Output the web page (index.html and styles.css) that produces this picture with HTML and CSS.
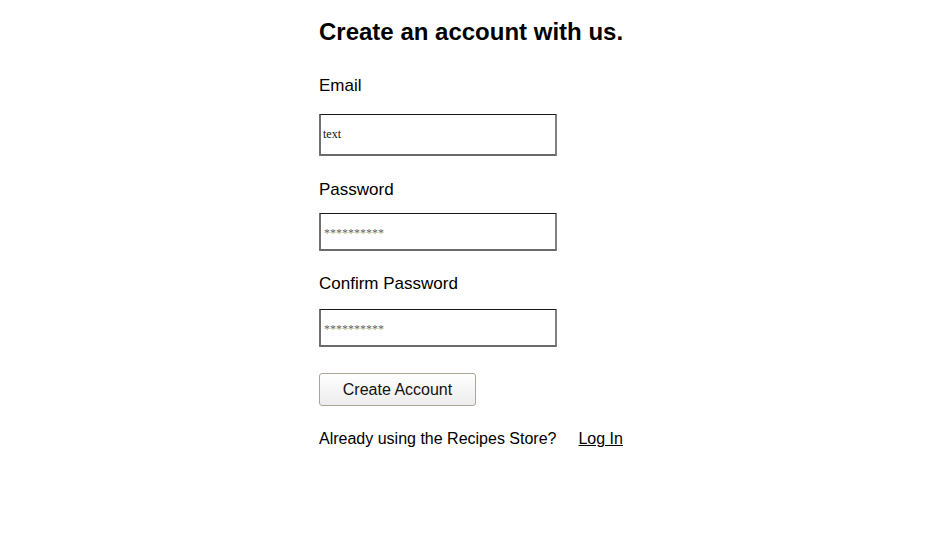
FILE: index.html
```html
<!DOCTYPE html>
<html>
<head>
<meta charset="utf-8">
<link rel="stylesheet" href="styles.css">
</head>
<body>
<main class="page">
  <div class="form">
    <h1 class="title">Create an account with us.</h1>
    <div class="label label-email">Email</div>
    <div class="box box-tall"><span class="value">text</span></div>
    <div class="label label-pass">Password</div>
    <div class="box"><span class="value dots">**********</span></div>
    <div class="label label-confirm">Confirm Password</div>
    <div class="box box-confirm"><span class="value dots">**********</span></div>
    <button class="btn">Create Account</button>
    <div class="footer">
      <span>Already using the Recipes Store?</span>
      <a class="link" href="#">Log In</a>
    </div>
  </div>
</main>
</body>
</html>
```

FILE: styles.css
```css
html, body {
  margin: 0;
  padding: 0;
  background: #ffffff;
}
body {
  font-family: "Liberation Sans", Arial, sans-serif;
  color: #000;
}
.page {
  display: flex;
  justify-content: flex-start;
  padding-left: 319px;
}
.form {
  width: fit-content;
  display: flex;
  flex-direction: column;
  align-items: flex-start;
  padding-top: 18px;
}
.title {
  margin: 0;
  font-size: 24px;
  line-height: 28px;
  font-weight: bold;
}
.label {
  font-size: 17px;
  line-height: 20px;
}
.label-email { margin-top: 30px; }
.label-pass { margin-top: 24px; }
.label-confirm { margin-top: 23px; }
.box {
  box-sizing: border-box;
  width: 238px;
  height: 38px;
  margin-top: 13px;
  border-top: 1px solid #1a1a1a;
  border-left: 2px solid #707070;
  border-right: 2px solid #808080;
  border-bottom: 2px solid #6a6a6a;
  border-radius: 1px;
  display: flex;
  align-items: center;
  padding-left: 2px;
}
.box-tall {
  height: 42px;
  margin-top: 18px;
}
.box-confirm { margin-top: 15px; }
.value {
  font-family: "Liberation Serif", "Times New Roman", serif;
  font-size: 12px;
  line-height: 14px;
  color: #111;
  margin-bottom: 1px;
}
.dots {
  color: #666;
  font-size: 12px;
  padding-left: 1px;
  margin-top: 2px;
  margin-bottom: 0;
}
.btn {
  margin-top: 26px;
  box-sizing: border-box;
  width: 157px;
  height: 33px;
  padding: 0;
  border: 1px solid #ada598;
  border-radius: 3px;
  background: linear-gradient(#ffffff, #ececec);
  font-family: "Liberation Sans", Arial, sans-serif;
  font-size: 16px;
  color: #111;
}
.footer {
  margin-top: 23px;
  display: flex;
  gap: 22px;
  font-size: 16px;
  line-height: 20px;
}
.link {
  color: #000;
  text-decoration: underline;
}
```
